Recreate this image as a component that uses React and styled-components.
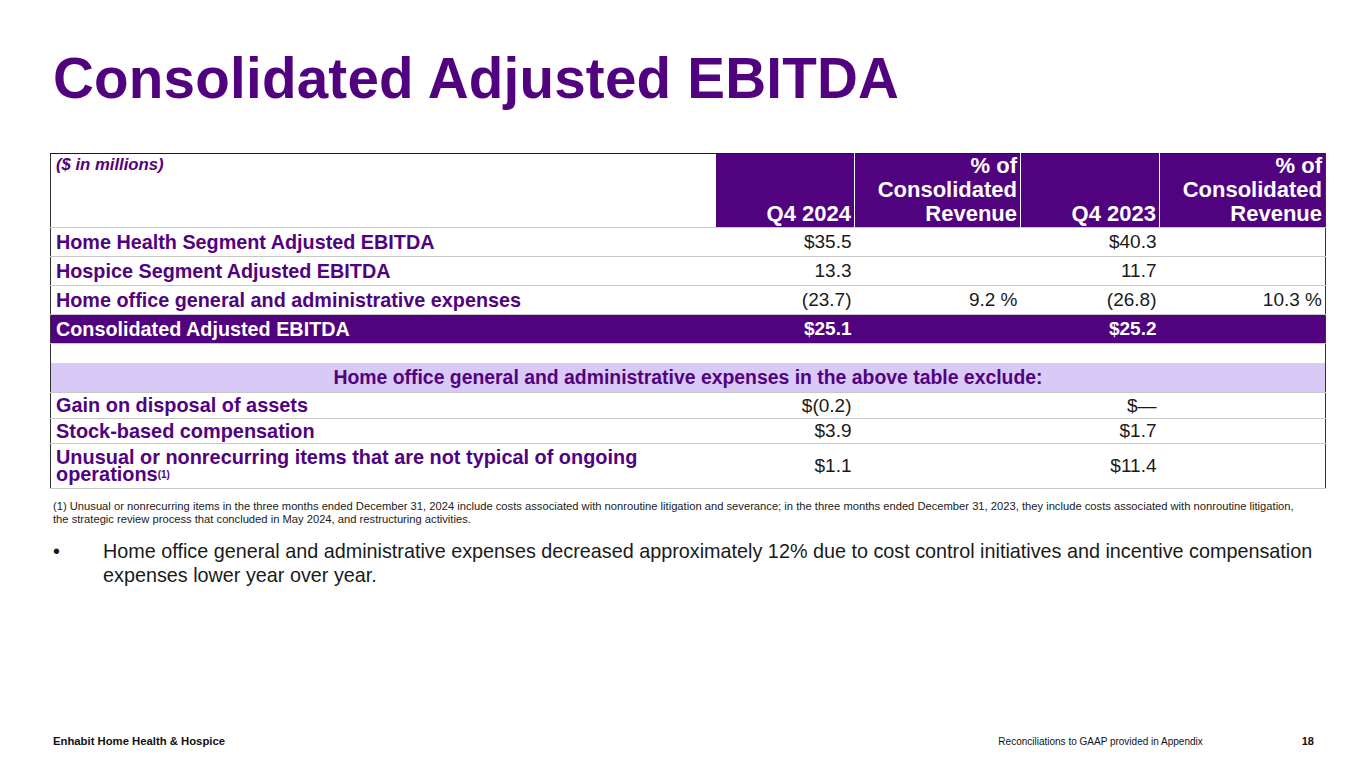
import React from 'react';
import styled, { createGlobalStyle } from 'styled-components';

const GlobalStyle = createGlobalStyle`
  html, body {
    margin: 0;
    padding: 0;
    background: #ffffff;
  }
  body {
    font-family: "Liberation Sans", Arial, sans-serif;
  }
`;

const PURPLE = '#51037f';
const LAVENDER = '#d9c9f6';

const Slide = styled.div`
  width: 1365px;
  height: 768px;
  box-sizing: border-box;
  padding: 47px 40px 0 50px;
  display: flex;
  flex-direction: column;
  position: relative;
  overflow: hidden;
`;

const Title = styled.h1`
  margin: 0 0 0 3px;
  font-size: 56.6px;
  line-height: 64px;
  font-weight: 700;
  color: ${PURPLE};
  letter-spacing: 0.2px;
`;

const Table = styled.table`
  margin-top: 42px;
  width: 1276px;
  border-collapse: collapse;
  table-layout: fixed;
  border-top: 1.5px solid #1a1a1a;
  border-left: 1.5px solid #333;
  border-right: 1.5px solid #333;
`;

const HeadCell = styled.th`
  background: ${(p) => (p.$blank ? '#fff' : PURPLE)};
  color: ${(p) => (p.$blank ? PURPLE : '#fff')};
  font-size: ${(p) => (p.$blank ? '16.7px' : '22px')};
  font-style: ${(p) => (p.$blank ? 'italic' : 'normal')};
  font-weight: 700;
  text-align: ${(p) => (p.$blank ? 'left' : 'right')};
  vertical-align: ${(p) => (p.$blank ? 'top' : 'bottom')};
  line-height: ${(p) => (p.$blank ? '19px' : '24px')};
  height: 74px;
  box-sizing: border-box;
  padding: ${(p) => (p.$blank ? '1px 5px' : '0 3px 1px 3px')};
  border-left: ${(p) => (p.$first ? 'none' : '1.5px solid #fff')};
  border-bottom: 1px solid #c8c8c8;
`;

const Row = styled.tr`
  background: ${(p) => (p.$total ? PURPLE : p.$band ? LAVENDER : '#fff')};
  color: ${(p) => (p.$total ? '#fff' : PURPLE)};
`;

const Label = styled.td`
  font-weight: 700;
  font-size: ${(p) => (p.$narrow ? '19.9px' : '19.8px')};
  line-height: 17px;
  padding: 0 5px;
  height: ${(p) => p.$h || 29}px;
  box-sizing: border-box;
  border-bottom: 1.5px solid #c8c8c8;
  text-align: left;
  vertical-align: middle;
`;

const Value = styled.td`
  font-size: 19px;
  font-weight: ${(p) => (p.$bold ? 700 : 400)};
  color: ${(p) => (p.$bold ? '#fff' : '#1a1a1a')};
  text-align: right;
  padding: 0 3px;
  border-bottom: 1.5px solid #c8c8c8;
  vertical-align: middle;
`;

const BandCell = styled.td`
  font-weight: 700;
  font-size: 19.4px;
  color: ${PURPLE};
  text-align: center;
  height: 29px;
  padding: 0;
  border-bottom: 1.5px solid #c8c8c8;
`;

const SpacerCell = styled.td`
  height: 19px;
  padding: 0;
`;

const Sup = styled.sup`
  font-size: 10px;
  line-height: 0;
  vertical-align: 3px;
`;

const Footnote = styled.p`
  margin: 11px 0 0 3px;
  font-size: 11.2px;
  line-height: 13px;
  color: #1a1a1a;
  width: 1245px;
`;

const Bullets = styled.ul`
  margin: 13px 0 0 0;
  padding: 0;
  list-style: none;
`;

const Bullet = styled.li`
  display: flex;
  font-size: 19.8px;
  line-height: 24px;
  color: #1a1a1a;

  &::before {
    content: '•';
    width: 53px;
    flex: 0 0 53px;
    padding-left: 3px;
    box-sizing: border-box;
  }
`;

const Footer = styled.footer`
  position: absolute;
  left: 53px;
  right: 51px;
  bottom: 21px;
  display: flex;
  align-items: baseline;
  color: #111;
`;

const Brand = styled.span`
  font-size: 11.3px;
  font-weight: 700;
  flex: 1;
`;

const Note = styled.span`
  font-size: 10px;
  margin-right: 99px;
`;

const Page = styled.span`
  font-size: 11px;
  font-weight: 700;
`;

const topRows = [
  { label: 'Home Health Segment Adjusted EBITDA', a: '$35.5', b: '', c: '$40.3', d: '' },
  { label: 'Hospice Segment Adjusted EBITDA', a: '13.3', b: '', c: '11.7', d: '' },
  { label: 'Home office general and administrative expenses', a: '(23.7)', b: '9.2 %', c: '(26.8)', d: '10.3 %' },
];

const excludeRows = [
  { label: 'Gain on disposal of assets', a: '$(0.2)', c: '$—', h: 26 },
  { label: 'Stock-based compensation', a: '$3.9', c: '$1.7', h: 25 },
];

export default function App() {
  return (
    <>
      <GlobalStyle />
      <Slide>
        <Title>Consolidated Adjusted EBITDA</Title>

        <Table>
          <colgroup>
            <col style={{ width: 665 }} />
            <col style={{ width: 139 }} />
            <col style={{ width: 166 }} />
            <col style={{ width: 139 }} />
            <col style={{ width: 166 }} />
          </colgroup>
          <thead>
            <tr>
              <HeadCell $blank $first>($ in millions)</HeadCell>
              <HeadCell $first>Q4 2024</HeadCell>
              <HeadCell>% of<br />Consolidated<br />Revenue</HeadCell>
              <HeadCell>Q4 2023</HeadCell>
              <HeadCell>% of<br />Consolidated<br />Revenue</HeadCell>
            </tr>
          </thead>
          <tbody>
            {topRows.map((r) => (
              <Row key={r.label}>
                <Label>{r.label}</Label>
                <Value>{r.a}</Value>
                <Value>{r.b}</Value>
                <Value>{r.c}</Value>
                <Value>{r.d}</Value>
              </Row>
            ))}
            <Row $total>
              <Label>Consolidated Adjusted EBITDA</Label>
              <Value $bold>$25.1</Value>
              <Value $bold />
              <Value $bold>$25.2</Value>
              <Value $bold />
            </Row>
            <tr>
              <SpacerCell colSpan={5} />
            </tr>
            <Row $band>
              <BandCell colSpan={5}>Home office general and administrative expenses in the above table exclude:</BandCell>
            </Row>
            {excludeRows.map((r) => (
              <Row key={r.label}>
                <Label $narrow $h={r.h}>{r.label}</Label>
                <Value>{r.a}</Value>
                <Value />
                <Value>{r.c}</Value>
                <Value />
              </Row>
            ))}
            <Row>
              <Label $narrow $h={45}>
                Unusual or nonrecurring items that are not typical of ongoing operations<Sup>(1)</Sup>
              </Label>
              <Value>$1.1</Value>
              <Value />
              <Value>$11.4</Value>
              <Value />
            </Row>
          </tbody>
        </Table>

        <Footnote>
          (1) Unusual or nonrecurring items in the three months ended December 31, 2024 include costs associated with nonroutine litigation and severance; in the three months ended December 31, 2023, they include costs associated with nonroutine litigation, the strategic review process that concluded in May 2024, and restructuring activities.
        </Footnote>

        <Bullets>
          <Bullet>
            <span>
              Home office general and administrative expenses decreased approximately 12% due to cost control initiatives and incentive compensation expenses lower year over year.
            </span>
          </Bullet>
        </Bullets>

        <Footer>
          <Brand>Enhabit Home Health &amp; Hospice</Brand>
          <Note>Reconciliations to GAAP provided in Appendix</Note>
          <Page>18</Page>
        </Footer>
      </Slide>
    </>
  );
}
